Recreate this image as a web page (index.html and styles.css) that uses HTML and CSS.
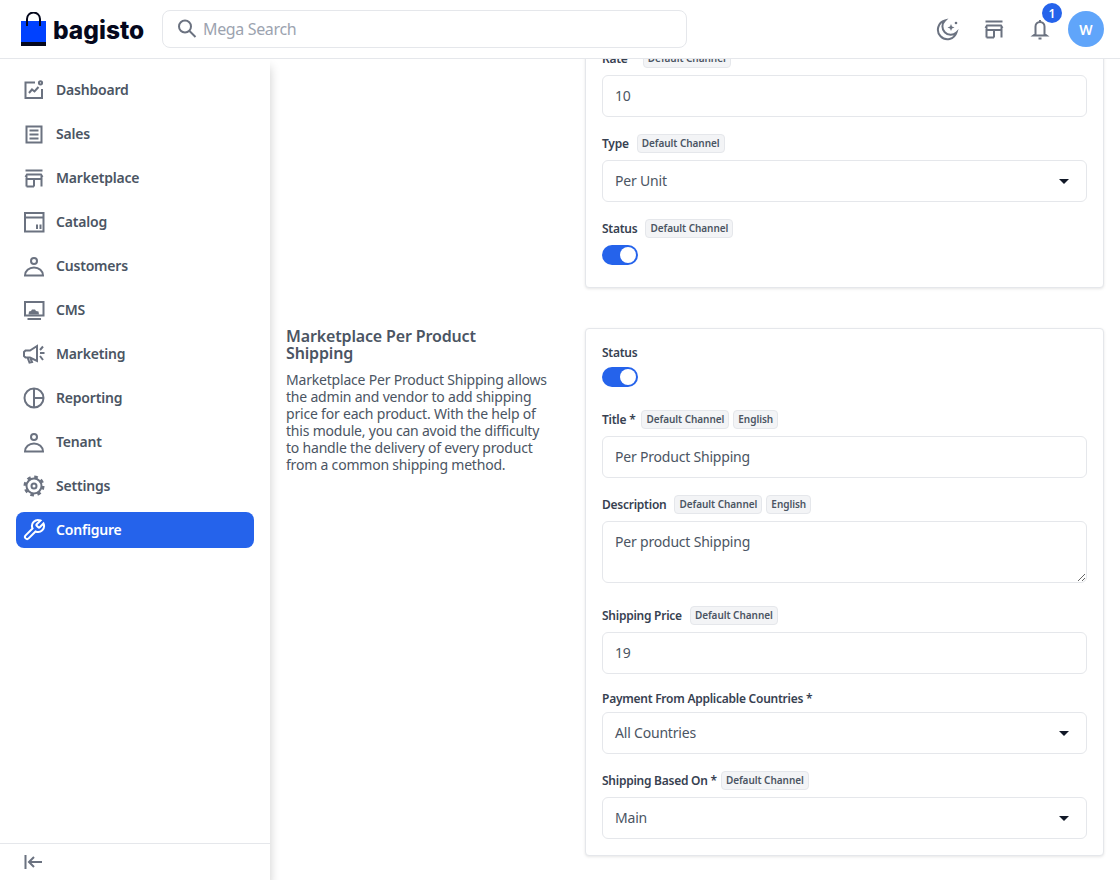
FILE: index.html
```html
<!DOCTYPE html>
<html lang="en">
<head>
    <meta charset="UTF-8">
    <meta name="viewport" content="width=device-width, initial-scale=1.0">
    <title>Configure - Shipping</title>
    <link rel="stylesheet" href="styles.css">
</head>
<body>

    <header class="topbar">
        <div class="brand">
            <svg class="brand-bag" width="25" height="34" viewBox="0 0 25 34">
                <rect x="0" y="9" width="25" height="25" fill="#0041ff"/>
                <rect x="0" y="30" width="25" height="4" fill="#05081c"/>
                <path d="M6 14V7a6.500 6.500 0 0 1 13 0v7" fill="none" stroke="#05081c" stroke-width="2"/>
            </svg>
            <span class="brand-name">bagisto</span>
        </div>
        <div class="search">
            <svg class="icon-search" width="24" height="24" viewBox="0 0 24 24"><circle cx="10" cy="9.500" r="6" /><path d="M14.500 14l6 6"/></svg>
            <span class="search-text">Mega Search</span>
        </div>
        <div class="topbar-actions">
            <svg class="icon" viewBox="0 0 24 24"><path d="M20.500 15.500A9.500 9.500 0 1 1 9 3.500a8 8 0 0 0 11.500 12z"/><path class="solid" d="M15 7l1 2.500 2.500 1-2.500 1-1 2.500-1-2.500-2.500-1 2.500-1z"/><circle class="solid" cx="20" cy="6" r="1.300"/></svg>
            <svg class="icon" viewBox="0 0 24 24"><path d="M3.500 4.500h17M4.500 10v10.500M19.500 10v10.500M3.500 11L5 8.500h14l1.500 2.500M4.500 13h15M12 13v7.500M4.500 20.500h7.500"/></svg>
            <div class="bell">
                <svg class="icon" viewBox="0 0 24 24"><path d="M7.500 17V9.500a4.500 4.500 0 0 1 9 0V17l2 1.500h-13zM12 3v2"/><path d="M10.500 21.500h3"/></svg>
                <span class="bell-count">1</span>
            </div>
            <div class="avatar">W</div>
        </div>
    </header>

    <div class="layout">
        <aside class="sidebar">
            <nav class="nav">
                <a class="nav-item">
                    <svg class="icon" viewBox="0 0 24 24"><path d="M13 4.500H3.500v15.500H20V11"/><circle cx="18.500" cy="4.800" r="1.600"/><path d="M7 15l3-3.500 2.500 2 4-4.500"/></svg>
                    <span class="nav-label">Dashboard</span>
                </a>
                <a class="nav-item">
                    <svg class="icon" viewBox="0 0 24 24"><path d="M4.500 4.500h15v16h-15zM7.500 8.500h9M7.500 12.500h9M7.500 16.500h9"/></svg>
                    <span class="nav-label">Sales</span>
                </a>
                <a class="nav-item">
                    <svg class="icon" viewBox="0 0 24 24"><path d="M3.500 4.500h17M4.500 10v10.500M19.500 10v10.500M3.500 11L5 8.500h14l1.500 2.500M4.500 13h15M12 13v7.500M4.500 20.500h7.500"/></svg>
                    <span class="nav-label">Marketplace</span>
                </a>
                <a class="nav-item">
                    <svg class="icon" viewBox="0 0 24 24"><path d="M3 3h18.500v18.500H3zM3 7.500h18.500M15 19v-4.500M18.500 19v-4.500"/></svg>
                    <span class="nav-label">Catalog</span>
                </a>
                <a class="nav-item">
                    <svg class="icon" viewBox="0 0 24 24"><circle cx="12" cy="7" r="3"/><path d="M3 21.500c0-4.500 4-8 9-8s9 3.500 9 8z"/></svg>
                    <span class="nav-label">Customers</span>
                </a>
                <a class="nav-item">
                    <svg class="icon" viewBox="0 0 24 24"><path d="M3 4h18.500v13.500H3zM5.500 21h13.500"/><path class="solid" d="M6.500 16.500l.5-3 2-.5 1-1.500h3l1 1.500 2.500.5.5 3z"/></svg>
                    <span class="nav-label">CMS</span>
                </a>
                <a class="nav-item">
                    <svg class="icon" viewBox="0 0 24 24"><path d="M15 4v15l-7-3.500H3.500L2 14v-4l1.500-1.500H8zM5.500 15.500l2 5 2.500-.5-1.500-3.500M18 11h4.500M18 8l3-3.500M18 14l3 4"/></svg>
                    <span class="nav-label">Marketing</span>
                </a>
                <a class="nav-item">
                    <svg class="icon" viewBox="0 0 24 24"><circle cx="12" cy="12" r="9.500"/><path d="M12 2.500v19M12 12h9.500"/></svg>
                    <span class="nav-label">Reporting</span>
                </a>
                <a class="nav-item">
                    <svg class="icon" viewBox="0 0 24 24"><circle cx="12" cy="7" r="3"/><path d="M3 21.500c0-4.500 4-8 9-8s9 3.500 9 8z"/></svg>
                    <span class="nav-label">Tenant</span>
                </a>
                <a class="nav-item">
                    <svg class="icon" viewBox="0 0 24 24"><circle cx="12" cy="12" r="7.500"/><circle cx="12" cy="12" r="2.500"/><circle class="teeth" cx="12" cy="12" r="9.200"/></svg>
                    <span class="nav-label">Settings</span>
                </a>
                <a class="nav-item nav-item-active">
                    <svg class="icon" viewBox="0 0 24 24"><path d="M14.700 6.300a1 1 0 0 0 0 1.400l1.600 1.600a1 1 0 0 0 1.400 0l3.770-3.770a6 6 0 0 1-7.940 7.940l-6.910 6.910a2.120 2.120 0 0 1-3-3l6.910-6.910a6 6 0 0 1 7.940-7.940l-3.760 3.760z"/></svg>
                    <span class="nav-label">Configure</span>
                </a>
            </nav>
            <div class="sidebar-footer">
                <svg class="icon" viewBox="0 0 24 24"><path d="M3.500 5v14M20 12H7M12 7l-5 5 5 5"/></svg>
            </div>
        </aside>

        <main class="content">
            <section class="config-row config-row-first">
                <div class="config-info"></div>
                <div class="card">
                    <div class="field">
                        <div class="field-label"><span class="label-title">Rate *</span> <span class="tag">Default Channel</span></div>
                        <input class="control" type="text" value="10">
                    </div>
                    <div class="field">
                        <div class="field-label"><span class="label-text">Type</span> <span class="tag">Default Channel</span></div>
                        <div class="select">Per Unit</div>
                    </div>
                    <div class="field field-last">
                        <div class="field-label"><span class="label-text">Status</span> <span class="tag">Default Channel</span></div>
                        <span class="toggle"></span>
                    </div>
                </div>
            </section>

            <section class="config-row">
                <div class="config-info">
                    <h2>Marketplace Per Product Shipping</h2>
                    <p>Marketplace Per Product Shipping allows the admin and vendor to add shipping price for each product. With the help of this module, you can avoid the difficulty to handle the delivery of every product from a common shipping method.</p>
                </div>
                <div class="card">
                    <div class="field">
                        <div class="field-label field-label-plain field-label-toggle">Status</div>
                        <span class="toggle"></span>
                    </div>
                    <div class="field">
                        <div class="field-label"><span class="label-title">Title *</span> <span class="tag">Default Channel</span> <span class="tag">English</span></div>
                        <input class="control" type="text" value="Per Product Shipping">
                    </div>
                    <div class="field">
                        <div class="field-label"><span class="label-text">Description</span> <span class="tag">Default Channel</span> <span class="tag">English</span></div>
                        <textarea class="control control-area">Per product Shipping</textarea>
                    </div>
                    <div class="field">
                        <div class="field-label"><span class="label-text">Shipping Price</span> <span class="tag">Default Channel</span></div>
                        <input class="control" type="text" value="19">
                    </div>
                    <div class="field">
                        <div class="field-label field-label-plain">Payment From Applicable Countries *</div>
                        <div class="select">All Countries</div>
                    </div>
                    <div class="field field-last">
                        <div class="field-label">Shipping Based On * <span class="tag">Default Channel</span></div>
                        <div class="select">Main</div>
                    </div>
                </div>
            </section>
        </main>
    </div>

</body>
</html>
```

FILE: styles.css
```css
* {
    box-sizing: border-box;
}

html, body {
    height: 100%;
}

body {
    margin: 0;
    background-color: #ffffff;
    font-family: "Noto Sans", Arial, sans-serif;
    color: #4b5563;
    overflow: hidden;
}

/* Top bar */
.topbar {
    position: relative;
    z-index: 2;
    display: flex;
    align-items: center;
    height: 59px;
    padding: 0 16px 0 21px;
    background-color: #ffffff;
    border-bottom: 1px solid #e5e7eb;
}

.brand {
    display: flex;
    align-items: flex-start;
    width: 141px;
    height: 34px;
    margin-top: -1px;
}

.brand-name {
    margin-left: 7px;
    margin-top: 3px;
    font-family: Inter, Arial, sans-serif;
    font-size: 24.500px;
    line-height: 30px;
    font-weight: 800;
    color: #05081c;
}

.search {
    display: flex;
    align-items: center;
    width: 525px;
    height: 38px;
    padding-left: 12px;
    border: 1px solid #e5e7eb;
    border-radius: 8px;
}

.icon-search {
    fill: none;
    stroke: #6b7280;
    stroke-width: 2;
}

.search-text {
    margin-left: 4px;
    font-size: 16px;
    letter-spacing: -0.35px;
    color: #9ca3af;
}

.topbar-actions {
    display: flex;
    align-items: center;
    gap: 22px;
    margin-left: auto;
}

.icon {
    flex: none;
    width: 24px;
    height: 24px;
    fill: none;
    stroke: #6b7280;
    stroke-width: 2;
}

.icon .solid {
    fill: #6b7280;
    stroke: none;
}

.icon .teeth {
    stroke-width: 2.600;
    stroke-dasharray: 3.600 3.620;
}

.bell {
    position: relative;
    height: 24px;
}

.bell-count {
    position: absolute;
    top: -14px;
    right: -10px;
    display: flex;
    align-items: center;
    justify-content: center;
    width: 20px;
    height: 20px;
    border-radius: 50%;
    background-color: #2563eb;
    color: #ffffff;
    font-size: 12px;
    font-weight: 600;
}

.avatar {
    display: flex;
    align-items: center;
    justify-content: center;
    width: 36px;
    height: 36px;
    margin-left: -6px;
    border-radius: 50%;
    background-color: #60a5fa;
    color: #ffffff;
    font-size: 14px;
    font-weight: 600;
}

/* Page layout */
.layout {
    display: flex;
    height: 821px;
}

.sidebar {
    position: relative;
    z-index: 1;
    display: flex;
    flex-direction: column;
    flex: none;
    width: 270px;
    background-color: #ffffff;
    box-shadow: 0 8px 10px 0 rgba(0, 0, 0, 0.2);
}

.nav {
    flex: 1;
    display: flex;
    flex-direction: column;
    gap: 8px;
    padding: 13px 16px 0;
}

.nav-item {
    display: flex;
    align-items: center;
    gap: 10px;
    height: 36px;
    padding-left: 6px;
    border-radius: 8px;
    font-size: 14px;
    font-weight: 600;
    letter-spacing: -0.2px;
    color: #4b5563;
}

.nav-label {
    margin-top: -2px;
}

.nav-item-active {
    background-color: #2563eb;
    color: #ffffff;
}

.nav-item-active .icon {
    stroke: #ffffff;
}

.sidebar-footer {
    display: flex;
    align-items: center;
    height: 37px;
    padding-left: 22px;
    border-top: 1px solid #e5e7eb;
}

/* Configuration sections */
.content {
    flex: 1;
    min-width: 0;
    padding: 0 16px;
    overflow: hidden;
}

.config-row {
    display: grid;
    grid-template-columns: 267px 1fr;
    gap: 32px;
    margin-bottom: 40px;
}

.config-row-first {
    margin-top: -27px;
}

.config-info h2 {
    max-width: 240px;
    margin: 0 0 9px;
    font-size: 16px;
    line-height: 17px;
    font-weight: 600;
    letter-spacing: -0.15px;
    color: #4b5563;
}

.config-info p {
    margin: 0;
    font-size: 14px;
    line-height: 17px;
    letter-spacing: -0.2px;
    color: #4b5563;
}

.card {
    padding: 16px;
    background-color: #ffffff;
    border: 1px solid #e5e7eb;
    border-radius: 4px;
    box-shadow: 0 1px 3px rgba(0, 0, 0, 0.1);
}

.field {
    display: flow-root;
    margin-bottom: 17px;
}

.field-last {
    margin-bottom: 0;
}

.field-label {
    display: flex;
    align-items: center;
    gap: 4px;
    height: 19px;
    margin-bottom: 7px;
    font-size: 12px;
    font-weight: 600;
    letter-spacing: -0.25px;
    color: #374151;
}

.field-label-plain {
    height: 14px;
    margin-bottom: 7px;
}

.field-label-toggle {
    margin-bottom: 8px;
}

/* labels without an asterisk sit a little further from their tag */
.label-text {
    margin-right: 4px;
}

.label-title {
    margin-right: 2px;
}

.tag {
    display: flex;
    align-items: center;
    height: 19px;
    padding: 0 4px 1px;
    border: 1px solid #e5e7eb;
    border-radius: 4px;
    background-color: #f3f4f6;
    font-size: 10px;
    font-weight: 600;
    letter-spacing: -0.05px;
    color: #4b5563;
}

.control {
    display: block;
    width: 100%;
    height: 42px;
    padding: 9px 12px 11px;
    border: 1px solid #e5e7eb;
    border-radius: 6px;
    background-color: #ffffff;
    font-family: inherit;
    font-size: 14px;
    line-height: 20px;
    letter-spacing: -0.2px;
    color: #4b5563;
}

.control-area {
    height: 62px;
    padding: 10px 12px;
    margin-bottom: 6px;
}

.select {
    position: relative;
    height: 42px;
    padding: 10px 12px;
    border: 1px solid #e5e7eb;
    border-radius: 6px;
    font-size: 14px;
    line-height: 20px;
    letter-spacing: -0.2px;
    color: #4b5563;
}

.select::after {
    content: "";
    position: absolute;
    top: 18px;
    right: 17px;
    border-left: 5px solid transparent;
    border-right: 5px solid transparent;
    border-top: 5px solid #111827;
}

.toggle {
    position: relative;
    display: block;
    width: 36px;
    height: 20px;
    margin-bottom: 6px;
    border-radius: 10px;
    background-color: #2563eb;
}

.toggle::after {
    content: "";
    position: absolute;
    top: 2px;
    right: 2px;
    width: 16px;
    height: 16px;
    border-radius: 50%;
    background-color: #ffffff;
}
```
